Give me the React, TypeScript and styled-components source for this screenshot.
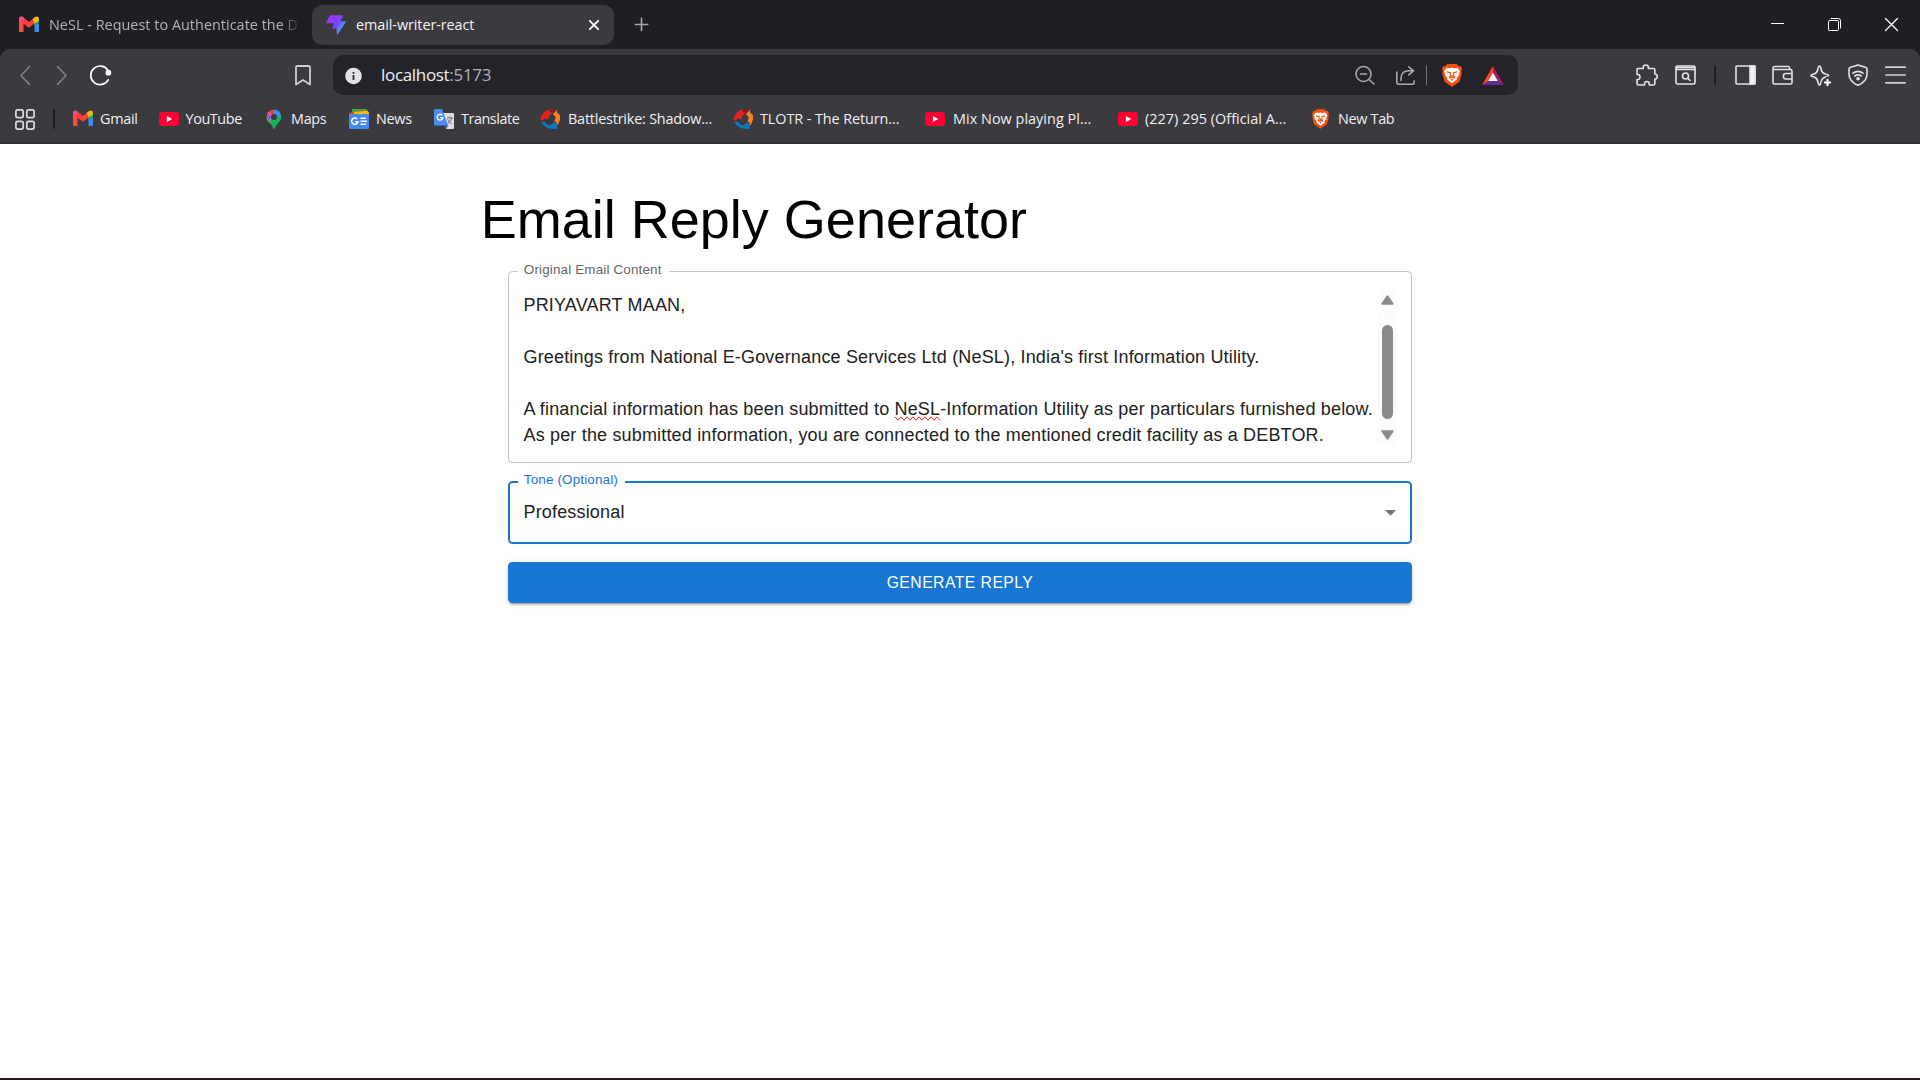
import React from "react";
import styled, { createGlobalStyle } from "styled-components";

const GlobalStyle = createGlobalStyle`
  *, *::before, *::after { box-sizing: border-box; }
  html, body { margin: 0; padding: 0; background: #fff; overflow: hidden; }
`;

const uiFont = `"Segoe UI", "Open Sans", "Noto Sans", sans-serif`;
const pageFont = `"Liberation Sans", Arial, sans-serif`;

const Window = styled.div`
  display: flex;
  flex-direction: column;
  width: 1920px;
  height: 1080px;
  background: #1f1e24;
  font-family: ${uiFont};
`;

const Svg = styled.svg`
  display: block;
  flex: none;
  overflow: visible;
`;

/* ---------- tab strip ---------- */
const TabStrip = styled.div`
  display: flex;
  align-items: center;
  height: 49px;
  padding-left: 5px;
  background: #1f1e24;
`;

const Tab = styled.div<{ $active?: boolean; $width: number }>`
  display: flex;
  align-items: center;
  gap: 10px;
  width: ${(p) => p.$width}px;
  height: 40px;
  padding: 0 14px;
  border-radius: 10px;
  background: ${(p) => (p.$active ? "#3b3a3f" : "transparent")};
  color: ${(p) => (p.$active ? "#f4f3f7" : "#b4b3b8")};
`;

const Label = styled.span<{ $track: number; $fade?: boolean }>`
  font-size: 14.4px;
  line-height: 20px;
  letter-spacing: ${(p) => p.$track}px;
  white-space: nowrap;
  ${(p) =>
    p.$fade
      ? "mask-image: linear-gradient(90deg, #000 calc(100% - 17px), rgba(0, 0, 0, 0.1));"
      : ""}
`;

const Push = styled.div`
  margin-left: auto;
`;

const TabClose = styled(Push)`
  padding-right: 1px;
`;

const NewTab = styled.div`
  padding-left: 21px;
`;

const WindowButtons = styled.div`
  display: flex;
  align-items: center;
  gap: 44px;
  margin-left: auto;
  padding-right: 22px;
`;

/* ---------- toolbar ---------- */
const Chrome = styled.div`
  height: 95px;
  background: #3b3a3f;
  border-radius: 10px 10px 0 0;
  border-bottom: 2px solid #2f2e33;
`;

const Toolbar = styled.div`
  display: flex;
  align-items: center;
  height: 52px;
`;

const Slot = styled.div<{ $width: number }>`
  display: flex;
  align-items: center;
  justify-content: center;
  flex: none;
  width: ${(p) => p.$width}px;
`;

const NavButtons = styled.div`
  display: flex;
  align-items: center;
  width: 333px;
  padding-left: 7px;
`;

const AddressBar = styled.div`
  display: flex;
  align-items: center;
  width: 1185px;
  height: 40px;
  padding: 0 8px 0 12px;
  border-radius: 10px;
  background: #242329;
`;

const Address = styled.div`
  padding-left: 19px;
  font-size: 17px;
  line-height: 24px;
  letter-spacing: -0.32px;
  color: #eeedf2;
`;

const Port = styled.span`
  color: #b3b2b8;
`;

const AddressActions = styled.div`
  display: flex;
  align-items: center;
  margin-left: auto;
`;

const Rule = styled.div<{ $color: string; $width: number }>`
  flex: none;
  width: ${(p) => p.$width}px;
  height: 20px;
  border-radius: 1px;
  background: ${(p) => p.$color};
`;

const ToolIcons = styled.div`
  display: flex;
  align-items: center;
  margin-left: auto;
  padding-right: 5px;
`;

const Bookmarks = styled.div`
  display: flex;
  align-items: center;
  height: 41px;
  padding: 0 0 5px 15px;
`;

const BookmarkList = styled.div`
  display: flex;
  align-items: center;
  padding-left: 1px;
`;

const Bookmark = styled.div<{ $width: number; $gap: number }>`
  display: flex;
  align-items: center;
  gap: ${(p) => p.$gap}px;
  flex: none;
  width: ${(p) => p.$width}px;
  color: #f1f0f4;
`;

/* ---------- page ---------- */
const Page = styled.main`
  flex: 1;
  padding-top: 44px;
  background: #fff;
  font-family: ${pageFont};
`;

const Container = styled.div`
  width: 1012.5px;
  margin: 0 auto;
  padding: 0 27px;
`;

const Title = styled.h1`
  margin: 0 0 19.9px;
  font-size: 54px;
  font-weight: 400;
  line-height: 63px;
  color: #000;
`;

const Form = styled.form`
  display: flex;
  flex-direction: column;
  gap: 18px;
  margin: 0 27px;
`;

const Field = styled.div<{ $focused?: boolean; $height: number }>`
  position: relative;
  display: flex;
  height: ${(p) => p.$height}px;
  border-radius: 4.5px;
  border: ${(p) => (p.$focused ? "2px solid #1976d2" : "1px solid #c4c4c4")};
`;

const FieldLabel = styled.label<{ $focused?: boolean }>`
  position: absolute;
  top: ${(p) => (p.$focused ? -13 : -12)}px;
  left: ${(p) => (p.$focused ? 8 : 9)}px;
  padding: 0 7px 0 6px;
  background: #fff;
  font-size: 13.5px;
  line-height: 19px;
  letter-spacing: 0.127px;
  white-space: nowrap;
  color: ${(p) => (p.$focused ? "#1976d2" : "#666")};
`;

const EmailText = styled.div`
  flex: 1;
  padding: 20px 0 0 14.75px;
  font-size: 18px;
  line-height: 26px;
  letter-spacing: 0.169px;
  white-space: pre;
  color: #212121;
`;

const Misspelled = styled.span`
  text-decoration: spelling-error;
`;

const Scrollbar = styled.div`
  display: flex;
  flex-direction: column;
  align-items: center;
  flex: none;
  width: 19px;
  height: 156px;
  margin: 17px 14px 0 0;
  padding: 6px 0 5px;
  background: #fcfcfc;
`;

const Thumb = styled.div`
  width: 11px;
  height: 94px;
  margin: 20px 0 11px;
  border-radius: 6px;
  background: #8b8b8b;
`;

const SelectValue = styled.div`
  display: flex;
  align-items: center;
  justify-content: space-between;
  flex: 1;
  padding: 0 14px 0 13.75px;
  font-size: 18px;
  letter-spacing: 0.169px;
  color: #212121;
`;

const Caret = styled(Svg)`
  margin-top: 2px;
`;

const Submit = styled.button`
  height: 41.5px;
  border: 0;
  border-radius: 4.5px;
  background: #1976d2;
  box-shadow: 0 3px 1px -2px rgba(0, 0, 0, 0.2), 0 2px 2px rgba(0, 0, 0, 0.14),
    0 1px 6px rgba(0, 0, 0, 0.12);
  font-family: ${pageFont};
  font-size: 15.75px;
  letter-spacing: 0.45px;
  line-height: 27px;
  color: #fff;
`;

const BottomEdge = styled.div`
  height: 2px;
  background: #2d1618;
`;

/* ---------- logos ---------- */
const GmailLogo = () => (
  <Svg width="20" height="20" viewBox="0 0 20 20">
    <path d="M0 4.6v11.3q0 1.1 1.2 1.1h3.3V8.3z" fill="#ff4b3e" />
    <path d="M15.5 8v9h3.3q1.2 0 1.2-1.1V9z" fill="#3f8cf5" />
    <path d="M15.5 6.5V11L20 8V4.6z" fill="#18b565" />
    <path d="M0 4.2Q0 1.5 2.2 1.5 3.2 1.5 4.2 2.3L10 7l5.8-4.7V8.2L10 12.7 0 5.6z" fill="#fc413d" />
    <path d="M0 4.2Q0 1.5 2.2 1.5 3.2 1.5 4.2 2.3L5.3 3.2 1.5 6.8 0 5.6z" fill="#f14e91" />
    <path d="M13.7 4l2.1-1.7Q17 1.4 18 1.5 20 1.7 20 4.4V5.2L15.5 8.6z" fill="#fcb814" />
  </Svg>
);

const YouTubeLogo = () => (
  <Svg width="20" height="20" viewBox="0 0 20 20">
    <rect y="3" width="20" height="14" rx="3.2" fill="#f03" />
    <path d="M7.9 7v6l5.3-3z" fill="#fff" />
  </Svg>
);

const MapsLogo = () => (
  <Svg width="20" height="20" viewBox="0 0 20 20">
    <path d="M2.7 8a7.3 7.3 0 0 1 14.6 0c0 4.5-4.7 6.3-6.3 11-.4 1.2-1.6 1.2-2 0C7.4 14.3 2.7 12.5 2.7 8z" fill="#0fb45b" />
    <path d="M2.7 8a7.3 7.3 0 0 1 2-5L10 8l-5 5.2C3.6 11.7 2.7 10.2 2.7 8z" fill="#fbbc04" />
    <path d="M4.7 3A7.3 7.3 0 0 1 10 .7V8z" fill="#ea4335" />
    <path d="M3.5 4.6A7.3 7.3 0 0 1 5.5 2.2L10 8z" fill="#f0518c" />
    <path d="M9 .8A7.3 7.3 0 0 1 17.2 7L10 8z" fill="#4a8af4" />
    <path d="M2.7 8a7 7 0 0 1 .9-3.6L10 8l-6 3.7z" fill="#9a55d6" />
    <path d="M4 11.7 10 8l-3.5 7z" fill="#36a877" />
    <circle cx="10" cy="8" r="3" fill="#3b3a3f" />
  </Svg>
);

const NewsLogo = () => (
  <Svg width="20" height="20" viewBox="0 0 20 20">
    <path d="M3 1q0-1 1-1h12.5q1 0 1 1v5H3z" fill="#35a853" />
    <path d="M0 4 13.5 1l1 5H1z" fill="#ea4335" />
    <path d="M5 3 18.5 1.5 20 3.5V7H5z" fill="#fbbc04" />
    <rect y="5" width="20" height="15" rx="1.2" fill="#4589f5" />
    <path d="M8.2 10A3.2 3.2 0 1 0 9 12.7H6.2" fill="none" stroke="#fff" strokeWidth="1.5" />
    <path d="M11.5 9.2H17M11.5 12.3h6.5M11.5 15.3H17" stroke="#fff" strokeWidth="1.5" />
  </Svg>
);

const TranslateLogo = () => (
  <Svg width="20" height="20" viewBox="0 0 20 20">
    <path d="M8 4h11q1 0 1 1v14q0 1-1 1h-7z" fill="#dcdce0" />
    <path d="M10.5 16h4L12 20z" fill="#3b55b8" />
    <path d="M1.2 0H8l6.2 16.5H1.2Q0 16.500 0 15.3V1.2Q0 0 1.2 0z" fill="#4a8bf5" />
    <path d="M8.2 6.2A2.9 2.9 0 1 0 8.9 8.600H6.2" fill="none" stroke="#fff" strokeWidth="1.3" />
    <path d="M13 9h6M15.8 7.5V9M17.8 9q-.8 3.5-4 5.5M13.8 10.5q1 2.5 4 4.5" fill="none" stroke="#66717c" strokeWidth="1" />
  </Svg>
);

const SwirlLogo = () => (
  <Svg width="20" height="20" viewBox="0 0 20 20">
    <path d="M0 10.500Q1 7 4 3.500 6.500.8 9.500.8L16.500 0 12.500 3.200 9 7.200 7.500 10.600 5 9.300 2.500 11.400z" fill="#e8201f" />
    <path d="M9.500.8 16.500 0 12.500 3.200 9.500 3z" fill="#8c1620" />
    <path d="M17.800 0Q16.600 2 17 3.500L20 6.200V10.500Q19 14.500 16.800 17L16.500 13.200 14.300 12.500 15.800 8.500 13 5z" fill="#f58420" />
    <path d="M.8 12.500 5.500 13 6.500 15.200 10 16.200 14.500 13.500 17 15 16.800 20Q11.500 20.500 7 18.800 3.500 17 .8 12.500z" fill="#0a79bd" />
  </Svg>
);

const BraveLogo = ({ width = 17, height = 20 }: { width?: number; height?: number }) => (
  <Svg width={width} height={height} viewBox="0 0 20 23">
    <path d="M5.5 0h9l2 2h1.8l1.7 3-.8 2.2.6 1.8-2.3 8.5L10 23l-7.500-5.5L.2 9l.6-1.800L0 5l1.700-3h1.800z" fill="#fb4f0f" />
    <path d="M4.5 3.800 8 4.300l2-.5 2 .5 3.500-.5L18 7.500l-1.200 2.300L17 11.500l-2.300 2.300.1 1.700L10 19.300l-4.800-3.800.1-1.700L3 11.500l.2-1.700L2 7.500z" fill="#fff" />
    <path d="M4.700 7.800 8.300 8.700 8.500 12 7 13.200M15.300 7.800l-3.600.9-.2 3.300 1.500 1.200M7.500 14.300 10 13.200l2.500 1.100M10 13v-2" fill="none" stroke="#fb4f0f" strokeWidth="1.3" />
    <path d="M8.500 15.700 10 14.700l1.500 1L10 16.700z" fill="#fb4f0f" />
  </Svg>
);

const BatLogo = () => (
  <Svg width="22" height="19" viewBox="0 0 22 19">
    <path d="M11 0 0 19 7 15 11 7z" fill="#ff4724" />
    <path d="M11 0v7l4 8 7 4z" fill="#9e1f63" />
    <path d="M0 19h22l-7-4H7z" fill="#662d91" />
    <path d="M11 6.5 15.7 15H6.300z" fill="#fff" />
  </Svg>
);

const BoltLogo = () => (
  <Svg width="20" height="20" viewBox="0 0 20 20">
    <defs>
      <linearGradient id="bolt" x1="0" y1="0" x2="1" y2="0.7">
        <stop offset="0.2" stopColor="#9a35ff" />
        <stop offset="0.6" stopColor="#7c45ff" />
        <stop offset="0.9" stopColor="#48a8ff" />
      </linearGradient>
    </defs>
    <path d="M3.800.3h12.800q.8 0 .4.800L14.300 6.300h5q.9 0 .4.900L11.600 19.200q-.7.8-.9-.2V13.600H6.700q-.8 0-.5-.8L8 8.300H.8Q-.2 8.300.3 7.400z" fill="url(#bolt)" />
  </Svg>
);

/* ---------- line icons ---------- */
type LineProps = { w: number; h: number; color?: string; sw?: number; children: React.ReactNode };
const Line = ({ w, h, color = "#e4e3e8", sw = 1.6, children }: LineProps) => (
  <Svg
    width={w}
    height={h}
    viewBox={`0 0 ${w} ${h}`}
    fill="none"
    stroke={color}
    strokeWidth={sw}
    strokeLinecap="round"
    strokeLinejoin="round"
  >
    {children}
  </Svg>
);

const bookmarks = [
  { label: "Gmail", width: 86, gap: 7, track: -0.3, logo: <GmailLogo /> },
  { label: "YouTube", width: 105, gap: 6.5, track: -0.4, logo: <YouTubeLogo /> },
  { label: "Maps", width: 85, gap: 7, track: -0.3, logo: <MapsLogo /> },
  { label: "News", width: 85, gap: 7, track: -0.3, logo: <NewsLogo /> },
  { label: "Translate", width: 106, gap: 7, track: -0.44, logo: <TranslateLogo /> },
  { label: "Battlestrike: Shadow...", width: 193, gap: 8, track: -0.2, logo: <SwirlLogo /> },
  { label: "TLOTR - The Return...", width: 192, gap: 7, track: -0.08, logo: <SwirlLogo /> },
  { label: "Mix Now playing Pl...", width: 193, gap: 8, track: 0.04, logo: <YouTubeLogo /> },
  { label: "(227) 295 (Official A...", width: 192, gap: 7, track: 0.04, logo: <YouTubeLogo /> },
  { label: "New Tab", width: 100, gap: 8, track: -0.32, logo: <Slot $width={20}><BraveLogo /></Slot> },
];

export default function App() {
  return (
    <Window>
      <GlobalStyle />
      <TabStrip>
        <Tab $width={307}>
          <GmailLogo />
          <Label $fade $track={0.03}>NeSL - Request to Authenticate the D</Label>
        </Tab>
        <Tab $active $width={302}>
          <BoltLogo />
          <Label $track={-0.07}>email-writer-react</Label>
          <TabClose>
            <Line w={10} h={10} color="#fff" sw={1.9}><path d="M.8.8l8.400 8.400M9.200.8l-8.400 8.400" /></Line>
          </TabClose>
        </Tab>
        <NewTab>
          <Line w={13} h={13} color="#a9a8ad"><path d="M6.500 .3v12.400M.3 6.500h12.400" /></Line>
        </NewTab>
        <WindowButtons>
          <Line w={13} h={13} color="#fff" sw={1}><path d="M0 5.500h13" strokeLinecap="butt" /></Line>
          <Line w={13} h={13} color="#fff" sw={1}>
            <rect x="0.5" y="2.5" width="10" height="10" rx="1" />
            <path d="M3 .5h7.500q2 0 2 2V10" />
          </Line>
          <Line w={13} h={13} color="#fff" sw={1.3}><path d="M.5.500l12 12M12.500.500l-12 12" /></Line>
        </WindowButtons>
      </TabStrip>

      <Chrome>
        <Toolbar>
          <NavButtons>
            <Slot $width={36}>
              <Line w={10} h={19} color="#85848a"><path d="M9.500 .5 1 9.500l8.500 9" /></Line>
            </Slot>
            <Slot $width={38}>
              <Line w={10} h={19} color="#85848a"><path d="M.5 .5 9 9.500l-8.500 9" /></Line>
            </Slot>
            <Slot $width={39}>
              <Line w={21} h={20} color="#fff" sw={1.7}>
                <path d="M18.200 14.800A9.300 9.300 0 1 1 18 5.500" />
                <circle cx="18.400" cy="7.700" r="2" fill="#fff" />
              </Line>
            </Slot>
            <Push>
              <Slot $width={60}>
                <Line w={16} h={21} color="#cfced3" sw={1.8}>
                  <path d="M1 2.500Q1 1 2.500 1h11Q15 1 15 2.500V19.500l-7-4.500-7 4.500z" />
                </Line>
              </Slot>
            </Push>
          </NavButtons>
          <AddressBar>
            <Svg width="17" height="17" viewBox="0 0 17 17">
              <circle cx="8.500" cy="9" r="8.300" fill="#e2e1e8" />
              <path d="M8.500 8v5M8.500 5v1.800" stroke="#242329" strokeWidth="1.800" />
            </Svg>
            <Address>localhost<Port>:5173</Port></Address>
            <AddressActions>
              <Slot $width={42}>
                <Line w={19} h={19} color="#a9a8ad">
                  <circle cx="8.500" cy="8" r="7.500" />
                  <path d="M5.500 8h6M14 13.500l5 4.500" />
                </Line>
              </Slot>
              <Slot $width={41}>
                <Line w={19} h={19} color="#a9a8ad">
                  <path d="M.8 6v10.200q0 2 2 2h13.400q2 0 2-2V15M5 14.500V13Q5 4.800 13 4.800H17M12.800.8 17.500 4.800l-4.700 4" />
                </Line>
              </Slot>
              <Rule $width={1} $color="#77767c" />
              <Slot $width={49}><BraveLogo width={20} height={23} /></Slot>
              <Slot $width={34}><BatLogo /></Slot>
            </AddressActions>
          </AddressBar>
          <ToolIcons>
            <Slot $width={36}>
              <Line w={22} h={22}>
                <path d="M1.800 4.500h5.400V3.500q0-2.500 2.600-2.500t2.600 2.500v1h5.400q1 0 1 1V10h.2q2.200.1 2.200 2.600t-2.200 2.600h-.2v4.500q0 1.300-1.200 1.300h-4.300v-.9Q13.200 17.500 10.900 17.500T8.500 20v1H2.500q-1.500 0-1.500-1.500V15.500h1Q4 15.300 4 13T2 10.500H1V5.500q0-1 .8-1z" />
              </Line>
            </Slot>
            <Slot $width={40}>
              <Line w={21} h={20}>
                <rect x="1" y="1" width="19" height="18" rx="1.500" />
                <path d="M1 4.500h19M1 2.500h19" />
                <circle cx="10.500" cy="11" r="3" />
                <path d="M13 13.500l2 2" />
              </Line>
            </Slot>
            <Slot $width={20}><Rule $width={2} $color="#1f1e24" /></Slot>
            <Slot $width={40}>
              <Line w={21} h={20}>
                <rect x="1" y="1" width="19" height="18" rx="1" />
                <rect x="15" y="1" width="5" height="18" fill="#f1f0f5" />
              </Line>
            </Slot>
            <Slot $width={34}>
              <Line w={21} h={20}>
                <path d="M1 4.500v13Q1 19 2.500 19h16q1.500 0 1.500-1.500V6Q20 4.500 18.500 4.500zM1 4.500V3q0-1.500 1.500-1.500h14Q17.500 1.500 17.800 4.500M20 8.500h-6q-2.500 0-2.500 2v1.500q0 2 2.500 2h6" />
              </Line>
            </Slot>
            <Slot $width={42}>
              <Line w={21} h={21}>
                <path d="M9.500 1Q10.600 1 11.200 4.500T15.500 9Q18.500 9.600 18.500 10.500T15.500 12Q12 12.800 11.200 16.500T9.500 20Q8.400 20 7.800 16.500T4 12Q1 11.400 1 10.500T4 9Q7 8.200 7.800 4.500T9.500 1z" />
                <path d="M17.500 13.500v8M13.500 17.500h8" stroke="#3b3a3f" strokeWidth="4" />
                <path d="M17.500 14.800v5.400M14.800 17.500h5.400" stroke="#fff" strokeWidth="2" />
              </Line>
            </Slot>
            <Slot $width={34}>
              <Line w={20} h={22}>
                <path d="M10 1 18 3.500Q19 4 19 5V10.500Q18.500 18 10 21.200 1.500 18 1 10.500V5Q1 4 2 3.500z" />
                <path d="M5 9.200q5-3.700 10 0M6.800 12q3.200-2.300 6.400 0" />
                <circle cx="10" cy="14.700" r="1" fill="#e4e3e8" />
              </Line>
            </Slot>
            <Slot $width={40}>
              <Line w={21} h={18} color="#d2d1d6" sw={1.7}><path d="M.8 1.200h19.400M.8 9h19.400M.8 16.800h19.400" /></Line>
            </Slot>
          </ToolIcons>
        </Toolbar>

        <Bookmarks>
          <Line w={20} h={21} color="#dddce1" sw={1.7}>
            <rect x="0.9" y="0.9" width="7.3" height="7.7" rx="1.8" />
            <rect x="11.8" y="0.9" width="7.3" height="7.7" rx="1.8" />
            <rect x="0.9" y="12.4" width="7.3" height="7.7" rx="1.8" />
            <rect x="11.8" y="12.4" width="7.3" height="7.7" rx="1.8" />
          </Line>
          <Slot $width={37}><Rule $width={2} $color="#1f1e24" /></Slot>
          <BookmarkList>
            {bookmarks.map((b) => (
              <Bookmark key={b.label} $width={b.width} $gap={b.gap}>
                {b.logo}
                <Label $track={b.track}>{b.label}</Label>
              </Bookmark>
            ))}
          </BookmarkList>
        </Bookmarks>
      </Chrome>

      <Page>
        <Container>
          <Title>Email Reply Generator</Title>
          <Form>
            <Field $height={192}>
              <FieldLabel>Original Email Content</FieldLabel>
              <EmailText>
                {"PRIYAVART MAAN,\n\nGreetings from National E-Governance Services Ltd (NeSL), India's first Information Utility.\n\nA financial information has been submitted to "}
                <Misspelled>NeSL</Misspelled>
                {"-Information Utility as per particulars furnished below.\nAs per the submitted information, you are connected to the mentioned credit facility as a DEBTOR."}
              </EmailText>
              <Scrollbar>
                <Svg width="13" height="10" viewBox="0 0 13 10">
                  <path d="M6.500 1 12 9H1z" fill="#8b8b8b" stroke="#8b8b8b" strokeWidth="1.500" strokeLinejoin="round" />
                </Svg>
                <Thumb />
                <Svg width="13" height="10" viewBox="0 0 13 10">
                  <path d="M6.500 9 12 1H1z" fill="#8b8b8b" stroke="#8b8b8b" strokeWidth="1.500" strokeLinejoin="round" />
                </Svg>
              </Scrollbar>
            </Field>
            <Field $focused $height={63}>
              <FieldLabel $focused>Tone (Optional)</FieldLabel>
              <SelectValue>
                Professional
                <Caret width="11" height="6" viewBox="0 0 11 6"><path d="M0 0h11L5.500 5.700z" fill="#757575" /></Caret>
              </SelectValue>
            </Field>
            <Submit type="button">GENERATE REPLY</Submit>
          </Form>
        </Container>
      </Page>
      <BottomEdge />
    </Window>
  );
}
